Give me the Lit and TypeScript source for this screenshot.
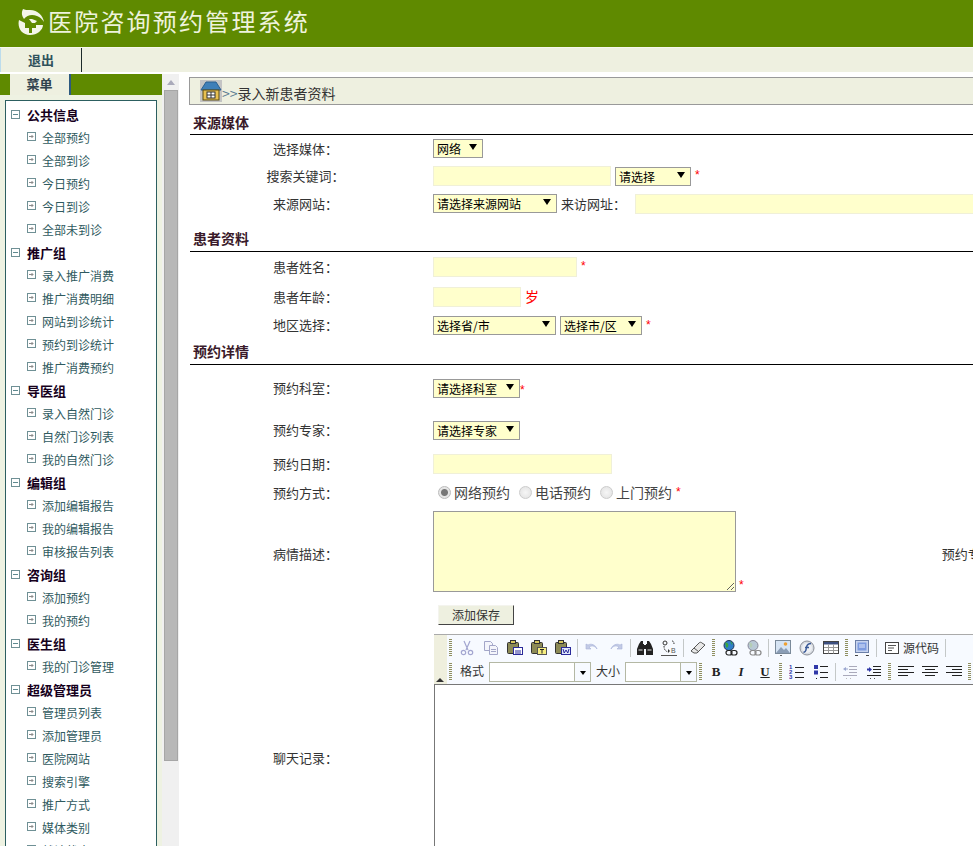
import { LitElement, html, css, svg } from "lit";
import { customElement } from "lit/decorators.js";

const menu: [string, string[]][] = [
  ["公共信息", ["全部预约", "全部到诊", "今日预约", "今日到诊", "全部未到诊"]],
  ["推广组", ["录入推广消费", "推广消费明细", "网站到诊统计", "预约到诊统计", "推广消费预约"]],
  ["导医组", ["录入自然门诊", "自然门诊列表", "我的自然门诊"]],
  ["编辑组", ["添加编辑报告", "我的编辑报告", "审核报告列表"]],
  ["咨询组", ["添加预约", "我的预约"]],
  ["医生组", ["我的门诊管理"]],
  ["超级管理员", ["管理员列表", "添加管理员", "医院网站", "搜索引擎", "推广方式", "媒体类别", "就诊状态"]],
];

const ic = (body: unknown) => html`<svg class="ic" viewBox="0 0 16 16" width="16" height="16">${body}</svg>`;
const clip = (mark: unknown) => svg`
  <rect x="0.5" y="2.5" width="11" height="11" rx="1" fill="#8c8a55" stroke="#333"/>
  <rect x="3.5" y="0.5" width="5" height="3" fill="#d8c860" stroke="#333"/>${mark}`;

const icons: Record<string, unknown> = {
  cut: ic(svg`<g fill="none" stroke="#a3a6d0" stroke-width="1.2"><path d="M5 1l4 9M11 1L7 10"/><circle cx="4.500" cy="12.500" r="2.200"/><circle cx="11.500" cy="12.500" r="2.200"/></g>`),
  copy: ic(svg`<g fill="#f4f5fb" stroke="#a3a6c8"><path d="M1.500 1.500h6l2 2v7h-8z"/><path d="M6.500 5.500h6l2 2v7h-8z"/><path d="M8 9.500h5M8 11.500h5" fill="none"/></g>`),
  paste: ic(clip(svg`<rect x="6.500" y="7.500" width="9" height="7" fill="#fff" stroke="#2a2a9a"/><path d="M8 11h6M8 13h6" stroke="#2a2a9a"/>`)),
  pastet: ic(clip(svg`<rect x="6.500" y="7.500" width="9" height="7" fill="#f6ee80" stroke="#555"/><path d="M9 9.500h4M11 9.500v4" stroke="#222"/>`)),
  pastew: ic(clip(svg`<rect x="6.500" y="7.500" width="9" height="7" fill="#dfe6fb" stroke="#2a2a9a"/><path d="M8 9l1.200 4 1.800-3 1.800 3L14 9" fill="none" stroke="#2a2a9a"/>`)),
  undo: ic(svg`<path d="M2 4v5h5L5 7c3-2 6-1 8 2-1-4-6-6-9-4z" fill="#c3cbe6" stroke="#a8b2d8" stroke-width=".6"/>`),
  redo: ic(svg`<path d="M14 4v5H9l2-2C8 5 5 6 3 9c1-4 6-6 9-4z" fill="#c3cbe6" stroke="#a8b2d8" stroke-width=".6"/>`),
  find: ic(svg`<g fill="#222"><path d="M2 4l2-3h2v3h1v11H0V9z"/><path d="M14 4l-2-3h-2v3H9v11h7V9z"/><rect x="7" y="5" width="2" height="4"/></g><path d="M1.500 10h4M10.500 10h4" stroke="#ddd"/>`),
  replace: ic(svg`<g fill="none" stroke="#333"><circle cx="4" cy="3" r="2"/><path d="M11 1c2 0 2 2 2 3M3 6c0 3 1 5 4 6" stroke-dasharray="1.500 1"/><path d="M0 15.500h16" stroke="#555"/></g><path d="M7 9l2 2-2 2z" fill="#333"/><text x="10" y="13" font-size="7" fill="#555" font-family="Liberation Sans">B</text>`),
  erase: ic(svg`<path d="M1 11l8-8c1-1 2-1 3 0l3 2-8 8H4z" fill="#e8e8e8" stroke="#555"/><path d="M4 8l5 4" stroke="#555"/>`),
  link: ic(svg`<circle cx="7" cy="5.500" r="5" fill="#2f7fc8" stroke="#235"/><path d="M3 2.500c3 0 4 2 3 4s-2 1-2 0M8 1c2 1 3 3 2 4" fill="#3aa53a"/><rect x="4" y="10.500" width="6" height="4.500" rx="2.200" fill="none" stroke="#222" stroke-width="1.200"/><rect x="9" y="10.500" width="6" height="4.500" rx="2.200" fill="none" stroke="#222" stroke-width="1.200"/>`),
  unlink: ic(svg`<circle cx="7" cy="5.500" r="5" fill="#b9c9d6" stroke="#889"/><path d="M3 2.500c3 0 4 2 3 4s-2 1-2 0" fill="#b5cdb5"/><rect x="4" y="10.500" width="6" height="4.500" rx="2.200" fill="none" stroke="#888" stroke-width="1.200"/><rect x="9" y="10.500" width="6" height="4.500" rx="2.200" fill="none" stroke="#888" stroke-width="1.200"/>`),
  image: ic(svg`<rect x=".5" y=".5" width="15" height="13" fill="#d6e4f4" stroke="#7a8a9a"/><circle cx="10.500" cy="4" r="1.800" fill="#f0a030"/><path d="M1 13l5-6 3 3 2-2 4 5z" fill="#8a9db5"/><path d="M5 15.500h2" stroke="#666"/>`),
  flash: ic(svg`<circle cx="8" cy="8" r="7" fill="#d9dde3" stroke="#8b8f98"/><circle cx="8" cy="8" r="5" fill="#eef0f4"/><path d="M12 3.500C9 3.500 8 5 7.500 7L7 10c-.3 1.500-1 2-2.500 2.500M6 7.500h4" fill="none" stroke="#3a5a98" stroke-width="1.400"/>`),
  table: ic(svg`<rect x=".5" y="1.500" width="15" height="12" fill="#fff" stroke="#444"/><rect x="1" y="2" width="14" height="2.500" fill="#3c4f80"/><path d="M1 7.500h14M1 10.500h14M5.500 4.500v9M10.500 4.500v9" stroke="#999"/>`),
  page: ic(svg`<rect x="1.500" y=".5" width="13" height="12" fill="#c8d4ef" stroke="#6b7fa8"/><rect x="3.500" y="2.500" width="9" height="8" fill="#7d9be0"/><path d="M5 5h6M5 7h6" stroke="#dfe7fa"/><path d="M1 15.500h3M12 15.500h3" stroke="#444"/>`),
  source: ic(svg`<rect x="1.500" y="2.500" width="13" height="11" fill="#fff" stroke="#444"/><path d="M4 5.500h8M4 8h6M4 10.500h4" stroke="#555"/>`),
  ol: ic(svg`<g fill="#3038a8" font-size="6" font-weight="700" font-family="Liberation Sans"><text x="0" y="5">1</text><text x="0" y="10">2</text><text x="0" y="15">3</text></g><path d="M6 3.500h9M6 8.500h9M6 13.500h9" stroke="#222"/>`),
  ul: ic(svg`<path d="M1 1h4v4H1zM1 6.500h4v4H1z" fill="#3038a8"/><path d="M7 2.500h8M7 8.500h8M7 13.500h8" stroke="#222"/><path d="M3 14h1v1H3z" fill="#222"/>`),
  outdent: ic(svg`<path d="M1 5l3-2v1.500h2v1H4V7z" fill="#9aa6d0"/><path d="M7 2.500h8M7 5.500h8M7 8.500h8M1 11.500h14" stroke="#aab"/><path d="M4 14.500h1M8 14.500h1" stroke="#bbb"/>`),
  indent: ic(svg`<path d="M1 4.500h2V3l3 2.500L3 8V6.500H1z" fill="#3038a8"/><path d="M7 2.500h8M7 5.500h8M7 8.500h8M1 11.500h14" stroke="#222"/><path d="M4 14.500h1M8 14.500h1" stroke="#555"/>`),
  left: ic(svg`<path d="M0 2.500h16M0 5.500h10M0 8.500h16M0 11.500h10" stroke="#222"/>`),
  center: ic(svg`<path d="M0 2.500h16M3 5.500h10M0 8.500h16M3 11.500h10" stroke="#222"/>`),
  right: ic(svg`<path d="M0 2.500h16M6 5.500h10M0 8.500h16M6 11.500h10" stroke="#222"/>`),
};

const row1 = ["g0", "cut", "copy", "paste", "pastet", "pastew", "s", "undo", "redo", "s", "find", "replace", "s", "erase", "g1", "link", "unlink", "s", "image", "flash", "table", "g", "page", "s"];
const row2 = ["g1", "ol", "ul", "s", "outdent", "indent", "g1", "left", "center", "right", "g"];

const tool = (k: string) =>
  k === "g0" || k === "g1" ? html`<span class="grip sp"></span>` :
  k === "g" ? html`<span class="grip"></span>` :
  k === "s" ? html`<span class="sep"></span>` :
  html`<span class="btn">${icons[k]}</span>`;

const sel = (text: string, w: string) => html`<span class="sel ${w}"><select><option>${text}</option></select></span>`;
const star = html`<span class="star">*</span>`;
const arrow = html`<svg class="arr" width="7" height="7" viewBox="0 0 7 7"><path d="M1 3.500h4M3.500 2l1.500 1.500L3.500 5" fill="none" stroke="#8a8a8a"/></svg>`;

@customElement("app-root")
export class AppRoot extends LitElement {
  static styles = css`
    :host { display: block; width: 973px; height: 846px; overflow: hidden; background: #fff; color: #333;
      font: 13px/1.2 "Noto Sans CJK SC", "Liberation Sans", sans-serif; }
    * { box-sizing: border-box; }
    .top { height: 47px; background: #5f8a00; display: flex; align-items: center; padding: 0 0 6px 18px; gap: 4px; }
    .top svg { margin-top: 2px; flex: none; }
    .top h1 { margin: 0; font-size: 24px; font-weight: 400; letter-spacing: 2.200px; color: #eef3dc; line-height: 1; }
    .bar { height: 25px; border-top: 1px solid #f6f8ee; background: #eef0e0; display: flex; }
    .bar a { width: 82px; border-left: 1px solid #bcdcec; border-right: 1px solid #1c2a2a; text-align: center;
      font-weight: 700; line-height: 23px; color: #30525c; font-size: 13px; }
    .body { display: flex; margin-top: 2px; }
    .side { width: 162px; flex: none; background: #eef2e2; }
    .side-head { height: 21px; background: #5f8a00; padding-left: 10px; }
    .side-head span { display: block; width: 61px; height: 21px; background: #eef0e0; border-right: 2px solid #2d5a80;
      text-align: center; line-height: 19px; font-weight: 700; color: #30424c; font-size: 13px; }
    .tree { margin: 5px 5px 0; width: 152px; height: 780px; background: #fff; border: 1px solid #2c5f60; padding-top: 2px; }
    .grp, .itm { height: 23px; display: flex; align-items: center; white-space: nowrap; }
    .grp { padding-left: 5px; gap: 7px; font-weight: 700; color: #16001c; font-size: 13px; }
    .itm { padding: 2px 0 0 21px; gap: 6px; color: #2f5a60; font-size: 12px; }
    .box { width: 9px; height: 9px; border: 1px solid #6f9095; position: relative; flex: none; background: #fff; display: block; }
    .grp .box::after { content: ""; position: absolute; left: 1px; right: 1px; top: 3px; height: 1px; background: #5f8a90; }
    .grp .box { margin-top: -1px; }
    .itm .box { margin-top: -4px; }
    .arr { display: block; }
    .scroll { width: 17px; flex: none; background: #f0f0f0; display: flex; flex-direction: column; align-items: center; height: 772px; }
    .up { width: 0; height: 0; border: 4px solid transparent; border-top: 0; border-bottom: 5px solid #aab; margin: 6px 0 5px; }
    .thumb { width: 14px; height: 671px; background: #b8b8b8; border: 1px solid #a6a6a6; }
    .main { flex: 1; min-width: 0; overflow: hidden; padding: 3px 0 0 10px; }
    .path { height: 28px; border: 1px solid #999; border-right: 0; background: #eef0e0; display: flex; align-items: flex-end;
      padding: 0 0 1px 10px; font-size: 14px; color: #333; line-height: 20px; white-space: nowrap; }
    .path svg { align-self: center; flex: none; }
    .path i { font-style: normal; color: #5a7a90; }
    .form { margin-left: 1px; width: 783px; }
    .sec { border-bottom: 1px solid #000; display: flex; align-items: flex-end; padding-left: 3px; font-weight: 700;
      font-size: 14px; color: #3a1a2a; line-height: 20px; }
    .r { display: grid; grid-template-columns: 242px 1fr; align-items: center; }
    .r > label { text-align: center; padding-right: 11px; color: #333; white-space: nowrap; }
    .f { padding-left: 1px; display: flex; align-items: center; white-space: nowrap; min-width: 0; }
    .h27 { height: 27px; } .h28 { height: 28px; } .h29 { height: 29px; } .h30 { height: 30px; }
    .s1 { height: 30px; padding-bottom: 2px; } .s2 { height: 35px; padding-bottom: 3px; } .s3 { height: 26px; padding-bottom: 3px; }
    .h46 { height: 46px; } .h38 { height: 38px; }
    .h91 { height: 91px; } .h35 { height: 35px; }
    .sel { position: relative; display: inline-flex; flex: none; height: 19px; }
    .sel::after { content: ""; position: absolute; right: 6px; top: 5px; border: 4px solid transparent; border-top: 6px solid #000; border-bottom: 0; pointer-events: none; }
    select { appearance: none; width: 100%; height: 19px; border: 1px solid #999; border-radius: 0; background: #ffc; padding: 0 0 0 3px;
      font: 12px "Noto Sans CJK SC", sans-serif; color: #000; margin: 0; }
    .w50 { width: 50px; } .w76 { width: 76px; } .w124 { width: 124px; } .w123 { width: 123px; } .w82 { width: 82px; } .w87 { width: 87px; }
    input[type=text] { height: 20px; border: 1px solid #f0f0d8; background: #ffc; padding: 0; margin: 0; flex: none; outline: 0; display: block; }
    .i178 { width: 178px; } .i144 { width: 144px; } .i88 { width: 88px; } .i179 { width: 179px; } .i400 { width: 400px; }
    .ml4 { margin-left: 4px; } .lbl { margin: 0 9px 0 4px; color: #333; }
    .star { color: #f00; margin-left: 4px; font: 12px "Liberation Sans", sans-serif; line-height: 12px; align-self: flex-start; margin-top: 3px; }
    .star.tight { margin-left: 0; margin-top: 5px; }
    .star.mid { align-self: center; margin: 0 0 0 -5px; }
    .star.low { align-self: flex-end; margin: 0 0 1px 3px; }
    .age { color: #f00; font-size: 14px; margin-left: 4px; }
    .radios { padding-left: 6px; font-size: 14px; color: #444; }
    .radios label { display: inline-flex; align-items: center; gap: 3px; margin-right: 9px; }
    input[type=radio] { appearance: none; width: 13px; height: 13px; margin: 0; border-radius: 50%; border: 1px solid #ccc; flex: none;
      background: radial-gradient(circle, #f6f6f6, #e0e0e0); }
    input[type=radio]:checked { background: radial-gradient(circle, #777 0 3px, #e6e6e6 4px); border-color: #bbb; }
    textarea { display: block; width: 303px; height: 81px; border: 1px solid #999; background: #ffc; margin: 0; padding: 0; flex: none; outline: 0; }
    .far { margin-left: 198px; flex: none; color: #333; padding-top: 5px; }
    .lift { padding-top: 5px; }
    .save { margin-left: 5px; width: 76px; height: 20px; padding: 0; background: #eef0e0; border: 1px solid #f4f4ee;
      border-right-color: #444; border-bottom-color: #444; font: 12px "Noto Sans CJK SC", sans-serif; color: #333; }
    .edr { align-items: start; margin-top: 2px; height: 248px; }
    .edr > label { align-self: center; }
    .editor { margin-left: 2px; height: 248px; width: 600px; display: flex; flex-direction: column; }
    .tools { display: flex; height: 50px; flex: none; border-top: 1px solid #aaa; }
    .fold { width: 13px; flex: none; background: #efefde; position: relative; }
    .fold::after { content: ""; position: absolute; left: 2px; bottom: 2px; border: 4px solid transparent; border-top: 0; border-bottom: 4px solid #333; }
    .rows { flex: 1; background: #f7faff; padding-top: 1px; }
    .tr { display: flex; align-items: center; height: 24px; font-size: 12px; color: #333; white-space: nowrap; }
    .tr + .tr { height: 23px; }
    .btn { width: 24px; height: 22px; display: flex; align-items: center; justify-content: center; flex: none; }
    .btn.txt { font: 700 13px "Liberation Serif", serif; color: #222; }
    .btn.it { font-style: italic; margin-left: 1px; }
    .btn.un { text-decoration: underline; }
    .ic { display: block; }
    .grip { width: 7px; height: 18px; flex: none; background: repeating-linear-gradient(#8f8f60 0 1px, transparent 1px 2px) center / 3px 100% no-repeat; }
    .grip.sp { margin-right: 1px; }
    .sep { width: 5px; height: 18px; flex: none; position: relative; }
    .sep::after { content: ""; position: absolute; left: 2px; top: 0; bottom: 0; width: 1px; background: #c4c8c8; }
    .srcbtn { display: flex; align-items: center; gap: 3px; padding: 0 4px 0 5px; flex: none; font-size: 12px; color: #333; }
    .combo { display: flex; height: 20px; flex: none; border: 1px solid #b4b8a4; background: #fff; position: relative; }
    .combo::after { content: ""; position: absolute; right: 0; top: 0; bottom: 0; width: 15px; border-left: 1px solid #b4b8a4; background: #f7faff; }
    .combo::before { content: ""; position: absolute; z-index: 1; right: 4px; top: 8px; border: 3px solid transparent; border-top: 4px solid #000; border-bottom: 0; }
    .c102 { width: 102px; margin: 0 5px; } .c72 { width: 72px; margin-left: 5px; }
    .lb2 { margin-left: 5px; }
    .area { flex: 1; background: #fff; border-top: 1px solid #777; border-left: 1px solid #777; }
  `;

  render() {
    return html`
      <header class="top">
        <svg width="26" height="28" viewBox="0 0 26 28">
          <path d="M5 1C3 5 4 8 6 11C9 7 14 6 19 8C22 9 24 11 26 14C25 8 20 2 12 2C9 2 7 2 5 1z" fill="#f4f6e8"/>
          <path d="M1 12C-1 20 4 27 12 27C19 27 25 22 25 17H18V20H14V25H11V20H7V15z" fill="#f4f6e8"/>
          <path d="M11 11h3l5 2-2 2h-3z" fill="#f4f6e8"/>
        </svg>
        <h1>医院咨询预约管理系统</h1>
      </header>
      <nav class="bar"><a>退出</a></nav>
      <div class="body">
        <aside class="side">
          <div class="side-head"><span>菜单</span></div>
          <div class="tree">
            ${menu.map(([g, items]) => html`
              <div class="grp"><span class="box"></span>${g}</div>
              ${items.map((t) => html`<div class="itm"><span class="box">${arrow}</span>${t}</div>`)}
            `)}
          </div>
        </aside>
        <div class="scroll"><span class="up"></span><span class="thumb"></span></div>
        <main class="main">
          <div class="path">
            <svg width="22" height="22" viewBox="0 0 22 22">
              <rect width="22" height="22" fill="#c4c4c4"/>
              <path d="M1 10L6 2h10l5 8z" fill="#3f7fb8" stroke="#2a5f90"/>
              <rect x="3" y="10" width="16" height="10" fill="#e8c050" stroke="#5a4a10"/>
              <rect x="7" y="12" width="8" height="6" fill="#fff" stroke="#333"/>
              <path d="M11 12v6M7 15h8" stroke="#333"/>
            </svg>
            <span><i>&gt;&gt;</i>录入新患者资料</span>
          </div>
          <div class="form">
            <div class="sec s1">来源媒体</div>
            <div class="r h27"><label>选择媒体：</label><div class="f">${sel("网络", "w50")}</div></div>
            <div class="r h28"><label>搜索关键词：</label><div class="f"><input type="text" class="i178" /><span class="ml4"></span>${sel("请选择", "w76")}${star}</div></div>
            <div class="r h27"><label>来源网站：</label><div class="f">${sel("请选择来源网站", "w124")}<span class="lbl">来访网址：</span><input type="text" class="i400" /></div></div>
            <div class="sec s2">患者资料</div>
            <div class="r h30"><label>患者姓名：</label><div class="f"><input type="text" class="i144" />${star}</div></div>
            <div class="r h29"><label>患者年龄：</label><div class="f"><input type="text" class="i88" /><span class="age">岁</span></div></div>
            <div class="r h28"><label>地区选择：</label><div class="f">${sel("选择省/市", "w123")}<span class="ml4"></span>${sel("选择市/区", "w82")}${star}</div></div>
            <div class="sec s3">预约详情</div>
            <div class="r h46"><label>预约科室：</label><div class="f">${sel("请选择科室", "w87")}<span class="star tight">*</span></div></div>
            <div class="r h38"><label>预约专家：</label><div class="f">${sel("请选择专家", "w87")}</div></div>
            <div class="r h30"><label>预约日期：</label><div class="f"><input type="text" class="i179" /></div></div>
            <div class="r h27"><label>预约方式：</label><div class="f radios">
              <label><input type="radio" name="m" checked />网络预约</label>
              <label><input type="radio" name="m" />电话预约</label>
              <label><input type="radio" name="m" />上门预约</label><span class="star mid">*</span>
            </div></div>
            <div class="r h91"><label class="lift">病情描述：</label><div class="f"><textarea></textarea><span class="star low">*</span><span class="far">预约专家</span></div></div>
            <div class="r h35"><label></label><div class="f"><button class="save">添加保存</button></div></div>
            <div class="r edr"><label>聊天记录：</label>
              <div class="editor">
                <div class="tools">
                  <div class="fold"></div>
                  <div class="rows">
                    <div class="tr">
                      ${row1.map(tool)}
                      <span class="srcbtn">${icons.source}源代码</span>
                      <span class="sep"></span>
                    </div>
                    <div class="tr">
                      <span class="grip sp"></span>
                      <span class="lb2">格式</span><span class="combo c102"></span>
                      <span>大小</span><span class="combo c72"></span>
                      <span class="grip"></span>
                      <span class="btn txt">B</span><span class="btn txt it">I</span><span class="btn txt un">U</span>
                      ${row2.map(tool)}
                    </div>
                  </div>
                </div>
                <div class="area"></div>
              </div>
            </div>
          </div>
        </main>
      </div>
    `;
  }
}
